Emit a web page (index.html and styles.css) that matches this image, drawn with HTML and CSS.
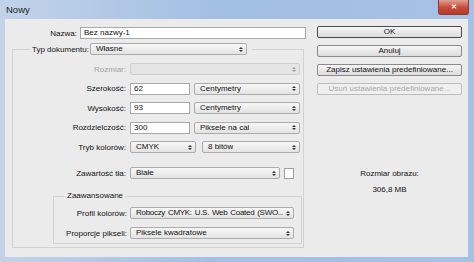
FILE: index.html
```html
<!DOCTYPE html>
<html lang="pl">
<head>
  <meta charset="UTF-8">
  <title>Nowy</title>
  <link rel="stylesheet" href="styles.css">
</head>
<body>
  <div class="window">
    <div class="titlebar">
      <span class="title">Nowy</span>
      <span class="close">&#x2715;</span>
    </div>
    <div class="panel">
      <div class="main">
        <div class="name-row">
          <span class="name-label">Nazwa:</span>
          <div class="input name-input">Bez nazwy-1</div>
        </div>

        <fieldset class="group">
          <legend class="doc-legend">
            <span>Typ dokumentu:</span>
            <div class="select doc-select"><span>Własne</span><i class="arrows"></i></div>
          </legend>

          <div class="row">
            <span class="label disabled">Rozmiar:</span>
            <div class="select off w170"><span></span><i class="arrows"></i></div>
          </div>
          <div class="row">
            <span class="label">Szerokość:</span>
            <div class="input w60">62</div>
            <div class="select w106"><span>Centymetry</span><i class="arrows"></i></div>
          </div>
          <div class="row">
            <span class="label">Wysokość:</span>
            <div class="input w60">93</div>
            <div class="select w106"><span>Centymetry</span><i class="arrows"></i></div>
          </div>
          <div class="row">
            <span class="label">Rozdzielczość:</span>
            <div class="input w60">300</div>
            <div class="select w106"><span>Piksele na cal</span><i class="arrows"></i></div>
          </div>
          <div class="row">
            <span class="label">Tryb kolorów:</span>
            <div class="select w66"><span>CMYK</span><i class="arrows"></i></div>
            <div class="select w98 gap6"><span>8 bitów</span><i class="arrows"></i></div>
          </div>
          <div class="row spaced">
            <span class="label">Zawartość tła:</span>
            <div class="select w150"><span>Białe</span><i class="arrows"></i></div>
            <div class="swatch"></div>
          </div>

          <fieldset class="advanced">
            <legend class="adv-legend">Zaawansowane</legend>
            <div class="row">
              <span class="label small">Profil kolorów:</span>
              <div class="select w164"><span class="tight">Roboczy CMYK: U.S. Web Coated (SWO...</span><i class="arrows"></i></div>
            </div>
            <div class="row">
              <span class="label small">Proporcje pikseli:</span>
              <div class="select w164"><span>Piksele kwadratowe</span><i class="arrows"></i></div>
            </div>
          </fieldset>
        </fieldset>
      </div>

      <div class="side">
        <button class="btn default">OK</button>
        <button class="btn">Anuluj</button>
        <button class="btn">Zapisz ustawienia predefiniowane...</button>
        <button class="btn" disabled>Usuń ustawienia predefiniowane...</button>
        <div class="info">
          <div>Rozmiar obrazu:</div>
          <div>306,8 MB</div>
        </div>
      </div>
    </div>
  </div>
</body>
</html>
```

FILE: styles.css
```css
body {
  margin: 0;
  font-family: "Liberation Sans", Arial, sans-serif;
  font-size: 8px;
  color: #111;
}
.window {
  width: 474px;
  height: 262px;
  background: linear-gradient(to right, #c2d3e8, #a2bfe4 45%, #a5c1e5);
  overflow: hidden;
}
.titlebar {
  height: 19px;
  display: flex;
  justify-content: space-between;
  align-items: flex-start;
}
.title {
  padding: 4px 0 0 6px;
  font-size: 9.5px;
  color: #1e1e1e;
}
.close {
  width: 31px;
  height: 15px;
  margin-right: 5px;
  border-radius: 0 0 3px 3px;
  background: linear-gradient(#e0a092, #c7493a 55%, #b83a2c);
  border: 1px solid #8d3a32;
  border-top: none;
  box-sizing: border-box;
  color: #fff;
  font-size: 7px;
  font-weight: bold;
  display: flex;
  align-items: center;
  justify-content: center;
}
.panel {
  margin: 0 6px 0 5px;
  height: 238px;
  background: #ebebeb;
  display: flex;
  gap: 11px;
  padding: 0 6px 0 7px;
  box-sizing: border-box;
}
.main {
  width: 294px;
}
.name-row {
  display: flex;
  align-items: center;
  margin-top: 8px;
}
.name-label {
  width: 65px;
  text-align: right;
  margin-right: 3px;
}
.input {
  height: 12px;
  background: #fff;
  border: 1px solid #a9a9a9;
  box-sizing: border-box;
  padding-left: 3px;
  line-height: 10px;
}
.name-input {
  width: 226px;
}
.group {
  margin: 4px 0 0 0;
  width: 292px;
  box-sizing: border-box;
  border: 1px solid #d2d2d2;
  padding: 0 0 3px 0;
}
.doc-legend {
  display: flex;
  align-items: center;
  margin-left: 17px;
  padding: 0 5px 0 2px;
}
.doc-legend span {
  margin-right: 1px;
}
.doc-select {
  width: 157px;
}
.select {
  height: 12px;
  border: 1px solid #acacac;
  border-radius: 2px;
  background: linear-gradient(#f7f7f7, #e3e3e3);
  box-sizing: border-box;
  display: flex;
  align-items: center;
  justify-content: space-between;
  gap: 3px;
  padding: 0 3px 0 5px;
  line-height: 10px;
  white-space: nowrap;
}
.select span {
  min-width: 0;
  overflow: hidden;
}
.select .tight {
  letter-spacing: -0.3px;
  word-spacing: 1px;
}
.select.off {
  background: #e4e4e4;
  border-color: #cfcfcf;
}
.select.off .arrows::before {
  border-bottom-color: #9a9a9a;
}
.select.off .arrows::after {
  border-top-color: #9a9a9a;
}
.arrows {
  display: flex;
  flex-direction: column;
  gap: 1px;
  flex: none;
}
.arrows::before,
.arrows::after {
  content: "";
  border-left: 2px solid transparent;
  border-right: 2px solid transparent;
}
.arrows::before {
  border-bottom: 2px solid #333;
}
.arrows::after {
  border-top: 2px solid #333;
}
.row {
  display: flex;
  align-items: center;
  gap: 4px;
  margin-top: 7.5px;
}
.group > .row:first-of-type {
  margin-top: 8px;
}
.row.spaced {
  margin-top: 14px;
}
.label {
  width: 113px;
  text-align: right;
}
.label.disabled {
  color: #a3a3a3;
}
.label.small {
  width: 73px;
  margin-right: -1px;
}
.w60 { width: 60px; }
.w66 { width: 66px; }
.w98 { width: 98px; }
.w106 { width: 106px; }
.w150 { width: 150px; }
.w164 { width: 164px; }
.w170 { width: 170px; }
.gap6 { margin-left: 2px; }
.swatch {
  width: 10px;
  height: 11px;
  background: #fff;
  border: 1px solid #a0a0a0;
  box-sizing: border-box;
}
.advanced {
  margin: 12px 0 0 40px;
  width: 249px;
  box-sizing: border-box;
  border: 1px solid #d2d2d2;
  padding: 0 0 4px 0;
}
.advanced .row:first-of-type {
  margin-top: 6px;
}
.advanced .row + .row {
  margin-top: 8px;
}
.adv-legend {
  margin-left: 11px;
  padding: 0 2px;
  line-height: 10px;
}
.side {
  width: 145px;
  display: flex;
  flex-direction: column;
  gap: 7px;
  padding-top: 7px;
}
.btn {
  height: 12px;
  padding: 0;
  font-family: inherit;
  font-size: 8px;
  line-height: 10px;
  color: #111;
  border: 1px solid #8a8a8a;
  border-radius: 2px;
  background: linear-gradient(#f6f6f6, #dcdcdc);
}
.btn.default {
  border-color: #4a4a4a;
}
.btn:disabled {
  color: #a8a8a8;
  border-color: #bdbdbd;
  background: #efefef;
}
.info {
  margin-top: 64px;
  text-align: center;
  line-height: 16px;
}
```
